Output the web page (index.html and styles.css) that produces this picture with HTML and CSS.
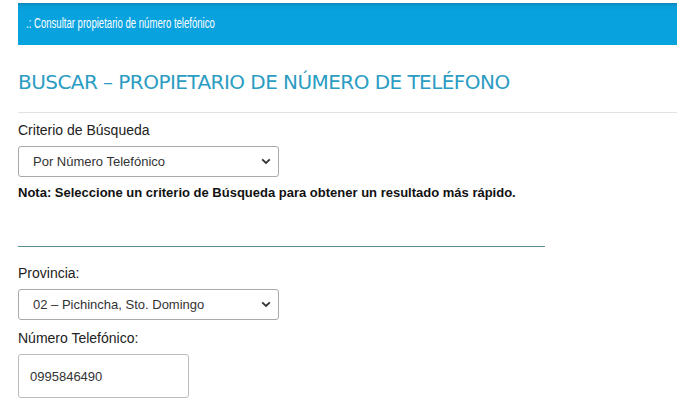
FILE: index.html
```html
<!DOCTYPE html>
<html lang="es">
<head>
<meta charset="utf-8">
<link rel="stylesheet" href="styles.css">
</head>
<body>
<div class="page">
  <div class="banner"><span class="banner-text">.: Consultar propietario de número telefónico</span></div>
  <h1 class="title">BUSCAR – PROPIETARIO DE NÚMERO DE TELÉFONO</h1>
  <div class="rule"></div>
  <div class="form">
    <label class="label">Criterio de Búsqueda</label>
    <div class="select">
      <span>Por Número Telefónico</span>
      <svg class="chev" width="10" height="7" viewBox="0 0 10 7"><path d="M1.2 1.3 L5 5 L8.8 1.3" fill="none" stroke="#333" stroke-width="1.8"/></svg>
    </div>
    <p class="note">Nota: Seleccione un criterio de Búsqueda para obtener un resultado más rápido.</p>
    <div class="divider"></div>
    <label class="label">Provincia:</label>
    <div class="select">
      <span>02 – Pichincha, Sto. Domingo</span>
      <svg class="chev" width="10" height="7" viewBox="0 0 10 7"><path d="M1.2 1.3 L5 5 L8.8 1.3" fill="none" stroke="#333" stroke-width="1.8"/></svg>
    </div>
    <label class="label label-tight">Número Telefónico:</label>
    <div class="input">0995846490</div>
  </div>
</div>
</body>
</html>
```
FILE: styles.css
```css
* { box-sizing: border-box; }
html, body { margin: 0; padding: 0; background: #fff; }
body { font-family: "Liberation Sans", Arial, sans-serif; color: #222; }
.page { padding: 3px 6px 0 18px; }
.banner {
  height: 42px;
  background: linear-gradient(#0a86b8 0, #079bd6 3px, #08a2df 8px, #08a2df 100%);
  color: #fff;
  font-size: 14.5px;
  line-height: 41px;
  padding-left: 8px;
}
.banner-text {
  display: inline-block;
  transform: scaleX(0.66);
  transform-origin: left center;
  white-space: nowrap;
}
.title {
  margin: 24px 0 0 0;
  font-family: "DejaVu Sans", Verdana, sans-serif;
  font-weight: normal;
  font-size: 20px;
  line-height: 26px;
  color: #2b9cc2;
  letter-spacing: -0.55px;
}
.rule { height: 1px; background: #e2e2e2; margin-top: 17px; }
.form { display: flex; flex-direction: column; align-items: flex-start; }
.label { font-size: 14px; line-height: 16px; margin-top: 9px; color: #222; }
.label-tight { margin-top: 10px; }
.select {
  width: 261px; height: 31px; margin-top: 8px;
  border: 1px solid #aaa; border-radius: 3px;
  display: flex; align-items: center; justify-content: space-between;
  padding: 0 7px 0 14px;
  font-size: 13px; color: #333;
}
.chev { display: block; }
.note { margin: 8px 0 0 0; font-size: 13px; font-weight: bold; line-height: 16px; color: #111; }
.divider { width: 527px; height: 1px; background: #5c8f98; margin-top: 45px; margin-bottom: 9px; }
.input {
  width: 171px; height: 44px; margin-top: 8px;
  border: 1px solid #bbb; border-radius: 3px;
  display: flex; align-items: center; padding-left: 11px;
  font-size: 13px; color: #333;
}
```
